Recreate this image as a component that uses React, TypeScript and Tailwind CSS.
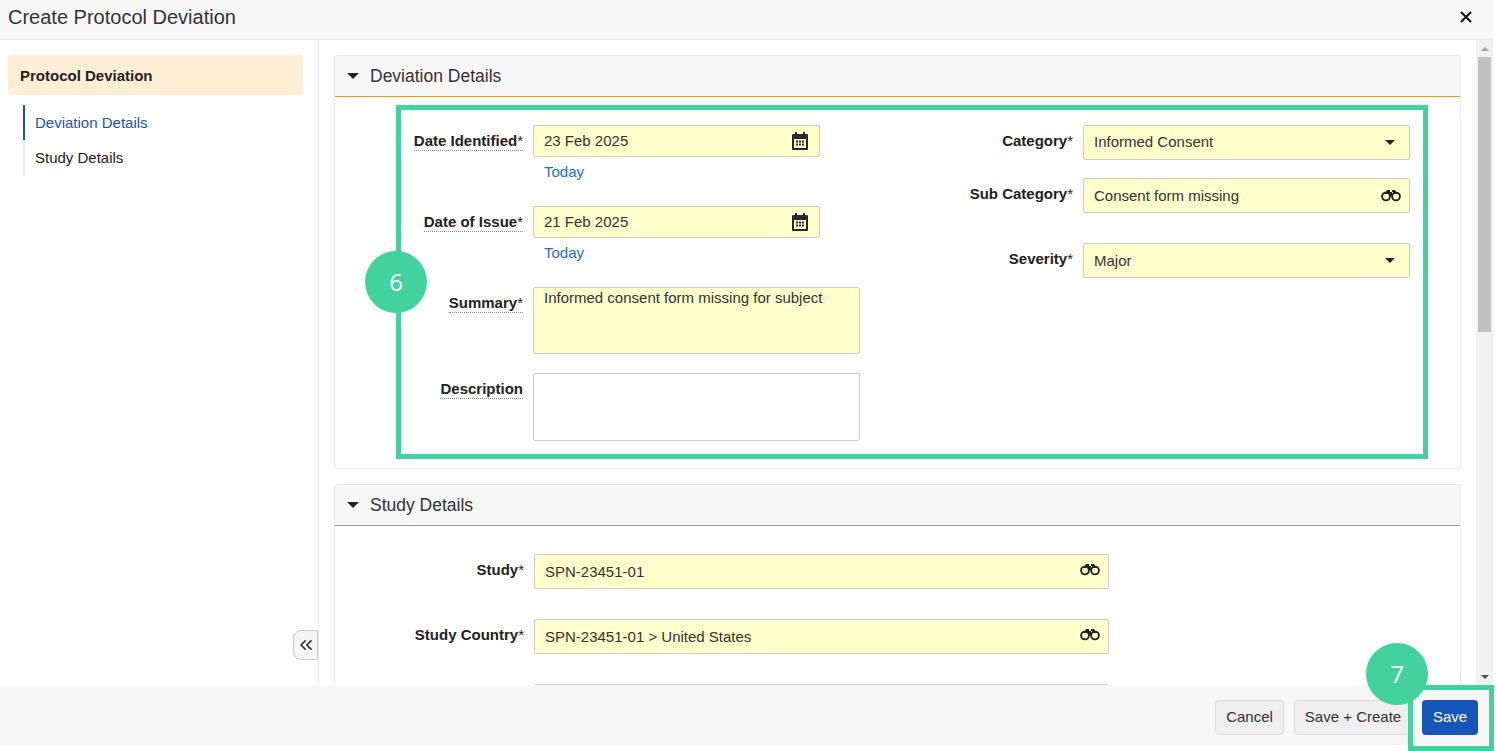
import { ChevronsLeft } from "lucide-react";
import type { ReactNode } from "react";

function Caret({ small }: { small?: boolean }) {
  return (
    <span
      className={
        small
          ? "mr-[6px] inline-block h-0 w-0 border-x-[5px] border-t-[5px] border-x-transparent border-t-[#222]"
          : "inline-block h-0 w-0 border-x-[6px] border-t-[6px] border-x-transparent border-t-[#222]"
      }
    />
  );
}

function CalendarIcon() {
  return (
    <svg width="16" height="18" viewBox="0 0 16 18" fill="#2a2a2a" className="shrink-0">
      <rect x="3" y="0" width="2" height="4" />
      <rect x="11" y="0" width="2" height="4" />
      <path d="M1 2h14a1 1 0 0 1 1 1v14a1 1 0 0 1-1 1H1a1 1 0 0 1-1-1V3a1 1 0 0 1 1-1zm1 5v9h12V7H2z" fillRule="evenodd" />
      <rect x="4" y="8.5" width="2" height="2" />
      <rect x="7" y="8.5" width="2" height="2" />
      <rect x="10" y="8.5" width="2" height="2" />
      <rect x="4" y="11.5" width="2" height="2" />
      <rect x="7" y="11.5" width="2" height="2" />
      <rect x="10" y="11.5" width="2" height="2" />
    </svg>
  );
}

function BinocularsIcon({ className }: { className: string }) {
  return (
    <svg width="20" height="14" viewBox="0 0 20 14" className={`shrink-0 ${className}`}>
      <path d="M3.5 6 L6 2 H9 V6 Z M16.5 6 L14 2 H11 V6 Z M8 4 h4 v4 h-4z" fill="#222" />
      <circle cx="5" cy="8.5" r="3.9" fill="none" stroke="#222" strokeWidth="1.9" />
      <circle cx="15" cy="8.5" r="3.9" fill="none" stroke="#222" strokeWidth="1.9" />
    </svg>
  );
}

function Label({ text, required, dotted, width }: { text: string; required?: boolean; dotted?: boolean; width: string }) {
  return (
    <div className={`flex shrink-0 justify-end ${width}`}>
      <span className={`text-[15px] leading-[19px] font-bold text-[#222] ${dotted ? "border-b border-dotted border-[#888]" : ""}`}>
        {text}
        {required && <span className="font-normal">*</span>}
      </span>
    </div>
  );
}

function Field({ value, icon, className, textClass }: { value: string; icon?: ReactNode; className: string; textClass?: string }) {
  return (
    <div className={`flex items-center justify-between rounded-[2px] border border-[#ccc] bg-[#ffffcb] pl-[10px] text-[15px] text-[#333] ${className}`}>
      <span className={textClass}>{value}</span>
      {icon}
    </div>
  );
}

function DateRow({ label, value }: { label: string; value: string }) {
  return (
    <div className="flex items-start gap-[10px]">
      <div className="pt-[6px]">
        <Label text={label} required dotted width="w-[188px]" />
      </div>
      <div>
        <Field value={value} icon={<CalendarIcon />} className="h-[32px] w-[287px] pr-[11px]" />
        <div className="mt-[5px] ml-[11px] text-[15px] leading-[20px] text-[#1a6fd0]">Today</div>
      </div>
    </div>
  );
}

function RightRow({ label, value, icon, className, textClass }: { label: string; value: string; icon: ReactNode; className: string; textClass?: string }) {
  return (
    <div className={`flex items-start gap-[10px] ${className}`}>
      <div className="pt-[4px]">
        <Label text={label} required width="w-[203px]" />
      </div>
      <Field value={value} icon={icon} textClass={textClass} className="-mt-[2px] h-[35px] w-[327px] pr-[8px]" />
    </div>
  );
}

function SectionHeader({ title, borderClass }: { title: string; borderClass: string }) {
  return (
    <div className={`flex h-[41px] items-center rounded-t-[3px] border-b bg-[#f7f7f7] pl-[12px] ${borderClass}`}>
      <Caret />
      <span className="ml-[11px] text-[17.5px] text-[#333]">{title}</span>
    </div>
  );
}

function StudyRow({ label, value, className }: { label: string; value: string; className?: string }) {
  return (
    <div className={`flex items-start gap-[10px] ${className ?? ""}`}>
      <div className="pt-[6px]">
        <Label text={label} required width="w-[189px]" />
      </div>
      <Field value={value} icon={<BinocularsIcon className="-mt-[5px]" />} textClass="pt-[2px]" className="h-[35px] w-[575px] pr-[8px]" />
    </div>
  );
}

export default function App() {
  return (
    <div className="relative h-[751px] w-[1496px] overflow-hidden bg-white font-['Liberation_Sans',Arial,sans-serif]">
      <div className="flex h-[40px] w-[1493px] items-center justify-between border-b border-[#eaeaea] bg-[#f7f7f7] pr-[21px] pb-[6px] pl-[8px]">
        <h1 className="text-[20px] text-[#333]">Create Protocol Deviation</h1>
        <svg width="12" height="12" viewBox="0 0 12 12" stroke="#111" strokeWidth="2">
          <path d="M1 1 L11 11 M11 1 L1 11" />
        </svg>
      </div>

      <div className="flex h-[645px] w-[1493px]">
        <aside className="relative w-[319px] shrink-0 border-r border-[#ebebeb] pt-[15px] pl-[8px]">
          <div className="flex h-[40px] w-[295px] items-center rounded-[3px] bg-[#ffeed6] pt-[2px] pl-[12px] text-[15px] font-bold text-[#222]">Protocol Deviation</div>
          <nav className="mt-[10px] ml-[15px] text-[15px]">
            <div className="flex h-[35px] items-center border-l-2 border-[#1655b9] pt-[1px] pl-[10px] text-[#1655b9]">Deviation Details</div>
            <div className="flex h-[35px] items-center border-l-2 border-[#ebebeb] pt-[1px] pl-[10px] text-[#222]">Study Details</div>
          </nav>
          <button className="absolute top-[590px] right-0 flex h-[30px] w-[25px] items-center justify-center rounded-l-[8px] border border-[#ccc] bg-[#f5f5f5] text-[#333]">
            <ChevronsLeft size={20} strokeWidth={2} />
          </button>
        </aside>

        <main className="min-w-0 flex-1 overflow-hidden pt-[15px] pl-[15px]">
          <section className="w-[1127px] rounded-[3px] border border-[#ebebeb]">
            <SectionHeader title="Deviation Details" borderClass="border-b-[#f7941d]" />
            <div className="flex h-[371px] pt-[28px]">
              <div className="w-[535px] shrink-0">
                <DateRow label="Date Identified" value="23 Feb 2025" />
                <div className="mt-[24px]">
                  <DateRow label="Date of Issue" value="21 Feb 2025" />
                </div>
                <div className="mt-[24px] flex items-start gap-[10px]">
                  <div className="pt-[6px]">
                    <Label text="Summary" required dotted width="w-[188px]" />
                  </div>
                  <div className="h-[67px] w-[327px] rounded-[2px] border border-[#ccc] bg-[#ffffcb] px-[10px] text-[15px] leading-[20px] text-[#333]">Informed consent form missing for subject</div>
                </div>
                <div className="mt-[19px] flex items-start gap-[10px]">
                  <div className="pt-[6px]">
                    <Label text="Description" dotted width="w-[188px]" />
                  </div>
                  <div className="h-[68px] w-[327px] rounded-[2px] border border-[#ccc] bg-white" />
                </div>
              </div>
              <div className="pt-[2px]">
                <RightRow label="Category" value="Informed Consent" icon={<Caret small />} className="" />
                <RightRow label="Sub Category" value="Consent form missing" icon={<BinocularsIcon className="-mt-[2px]" />} textClass="pt-[2px]" className="mt-[20px]" />
                <RightRow label="Severity" value="Major" icon={<Caret small />} textClass="pt-[2px]" className="mt-[32px]" />
              </div>
            </div>
          </section>

          <section className="mt-[15px] w-[1127px] rounded-[3px] border border-[#ebebeb]">
            <SectionHeader title="Study Details" borderClass="border-b-[#999]" />
            <div className="pt-[28px]">
              <StudyRow label="Study" value="SPN-23451-01" />
              <StudyRow label="Study Country" value="SPN-23451-01 > United States" className="mt-[30px]" />
              <div className="mt-[30px] ml-[199px] h-[35px] w-[575px] rounded-[2px] border border-[#ccc] bg-[#ffffcb]" />
            </div>
          </section>
        </main>

        <div className="flex w-[17px] shrink-0 flex-col items-center bg-[#f1f1f1]">
          <div className="flex h-[17px] items-center justify-center">
            <span className="h-0 w-0 border-x-[4px] border-b-[4px] border-x-transparent border-b-[#a3a3a3]" />
          </div>
          <div className="h-[275px] w-[13px] bg-[#c1c1c1]" />
          <div className="flex-1" />
          <div className="flex h-[17px] items-center justify-center">
            <span className="h-0 w-0 border-x-[4px] border-t-[4px] border-x-transparent border-t-[#505050]" />
          </div>
        </div>
      </div>

      <footer className="flex h-[60px] w-[1493px] items-center justify-end gap-[10px] bg-[#f7f7f7] pt-[4px] pr-[15px] text-[15px]">
        <button className="h-[35px] w-[69px] rounded-[4px] border border-[#ddd] bg-[#eeeeee] pt-[1px] text-[#333]">Cancel</button>
        <button className="h-[35px] w-[118px] rounded-[4px] border border-[#ddd] bg-[#eeeeee] pt-[1px] text-[#333]">Save + Create</button>
        <button className="h-[35px] w-[56px] rounded-[4px] bg-[#1655b9] pt-[1px] font-normal text-white">Save</button>
      </footer>

      {/* tutorial callouts on top of the form */}
      <div className="absolute top-[105px] left-[396px] h-[354px] w-[1032px] border-[5px] border-[#41d29f]" />
      <div className="absolute top-[251px] left-[365px] flex h-[62px] w-[62px] items-center justify-center rounded-full bg-[#41d29f] font-['Open_Sans',sans-serif] text-[24px] text-white">6</div>
      <div className="absolute top-[685px] left-[1408px] h-[66px] w-[86px] border-[5px] border-[#41d29f]" />
      <div className="absolute top-[643px] left-[1366px] flex h-[62px] w-[62px] items-center justify-center rounded-full bg-[#41d29f] font-['Open_Sans',sans-serif] text-[24px] text-white">7</div>
    </div>
  );
}
